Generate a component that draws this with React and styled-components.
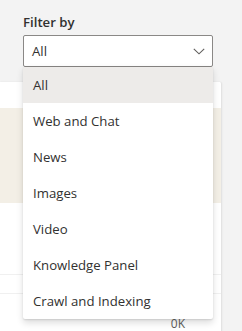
import React from "react";
import styled, { createGlobalStyle } from "styled-components";

const Global = createGlobalStyle`
  html, body { margin: 0; padding: 0; }
  body {
    background: #f3f3f3;
    font-family: "Segoe UI", "Open Sans", "Noto Sans", sans-serif;
    -webkit-font-smoothing: antialiased;
  }
`;

const Page = styled.div`
  position: relative;
  width: 242px;
  height: 331px;
  overflow: hidden;
  background: #f3f3f3;
`;

const Header = styled.div`
  padding: 13px 0 0 23px;
  display: flex;
  flex-direction: column;
  gap: 4px;
  position: relative;
  z-index: 2;
`;

const Label = styled.div`
  font-size: 13.2px;
  font-weight: 600;
  color: #323130;
  line-height: 18px;
`;

const Field = styled.div`
  position: relative;
  width: 190px;
`;

const Select = styled.div`
  box-sizing: border-box;
  width: 190px;
  height: 32px;
  border: 1px solid #8a8886;
  border-radius: 2px;
  background: #fff;
  display: flex;
  align-items: center;
  justify-content: space-between;
  padding: 0 7px 0 8px;
  font-size: 13.2px;
  color: #323130;
`;

const Menu = styled.ul`
  position: absolute;
  top: 32px;
  left: 0;
  width: 190px;
  margin: 0;
  padding: 0;
  list-style: none;
  background: #fff;
  border-radius: 2px;
  box-shadow: 0 3.2px 7.2px rgba(0, 0, 0, 0.132), 0 0.6px 1.8px rgba(0, 0, 0, 0.108);
`;

const Item = styled.li`
  height: 36px;
  display: flex;
  align-items: center;
  padding: 0 10px;
  font-size: 13.2px;
  color: #323130;
  background: ${(p) => (p.$selected ? "#edebe9" : "transparent")};
`;

const Card = styled.div`
  margin-top: 15px;
  width: 221px;
  height: 300px;
  background: #fff;
  border-right: 1px solid #e3e3e3;
  border-top-right-radius: 2px;
  box-shadow: 0 0 2px rgba(0, 0, 0, 0.08);
  display: flex;
  flex-direction: column;
`;

const Gap = styled.div`
  height: ${(p) => p.$h}px;
  flex: none;
`;

const Band = styled.div`
  height: 95px;
  background: #f3efe6;
  flex: none;
`;

const Row = styled.div`
  height: ${(p) => p.$h}px;
  border-bottom: 1px solid #f0f0f0;
  flex: none;
  box-sizing: border-box;
`;

const Foot = styled.div`
  display: flex;
  justify-content: flex-end;
  padding-right: 36px;
  font-size: 12px;
  color: #605e5c;
  line-height: 16px;
  margin-top: 22px;
`;

const Chevron = () => (
  <svg width="12" height="7" viewBox="0 0 12 7" fill="none">
    <path d="M0.8 0.8 L6 5.8 L11.2 0.8" stroke="#605e5c" strokeWidth="1.1" />
  </svg>
);

const options = [
  "All",
  "Web and Chat",
  "News",
  "Images",
  "Video",
  "Knowledge Panel",
  "Crawl and Indexing",
];

export default function App() {
  return (
    <Page>
      <Global />
      <Header>
        <Label>Filter by</Label>
        <Field>
          <Select>
            <span>All</span>
            <Chevron />
          </Select>
          <Menu>
            {options.map((o) => (
              <Item key={o} $selected={o === "All"}>
                {o}
              </Item>
            ))}
          </Menu>
        </Field>
      </Header>
      <Card>
        <Gap $h={26} />
        <Band />
        <Row $h={72} />
        <Row $h={19} />
        <Foot>0K</Foot>
      </Card>
    </Page>
  );
}
